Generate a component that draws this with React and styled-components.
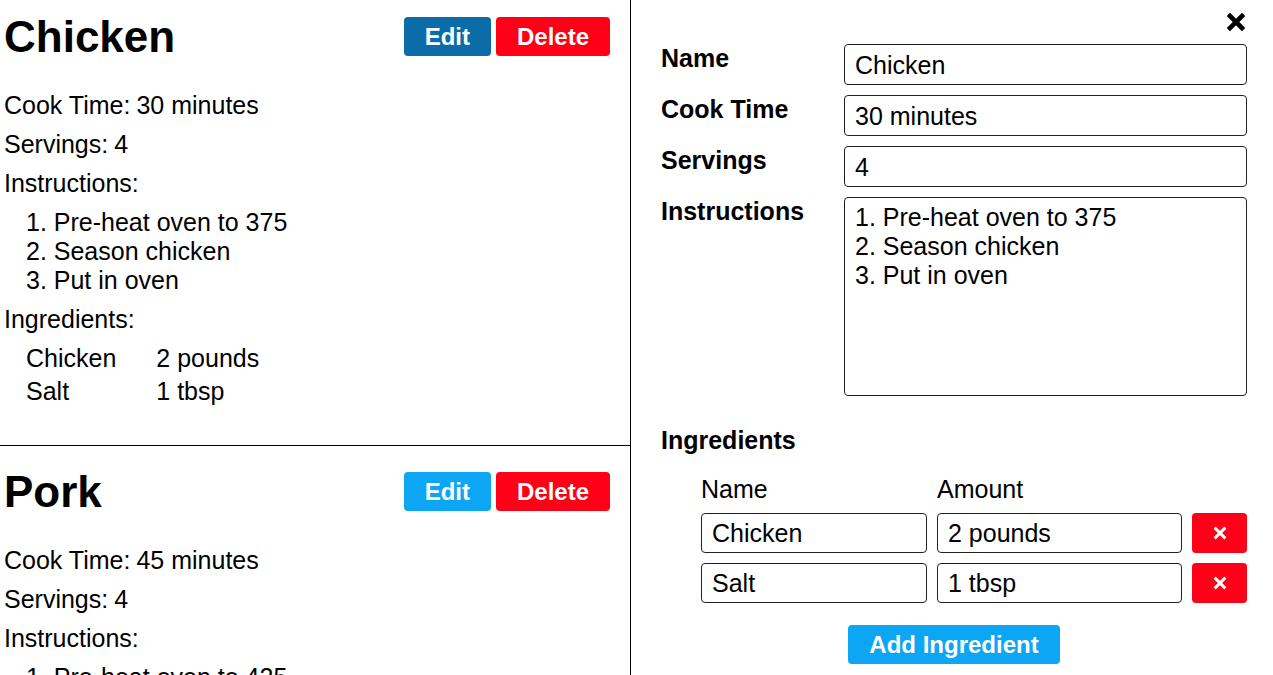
import React from "react";
import styled, { createGlobalStyle } from "styled-components";

const GlobalStyle = createGlobalStyle`
  * { box-sizing: border-box; }
  body {
    margin: 0;
    font-family: "Liberation Sans", Arial, sans-serif;
    color: #000;
    background: #fff;
  }
`;

const recipes = [
  {
    id: 1,
    name: "Chicken",
    cookTime: "30 minutes",
    servings: 4,
    instructions: "1. Pre-heat oven to 375\n2. Season chicken\n3. Put in oven",
    ingredients: [
      { id: 1, name: "Chicken", amount: "2 pounds" },
      { id: 2, name: "Salt", amount: "1 tbsp" },
    ],
  },
  {
    id: 2,
    name: "Pork",
    cookTime: "45 minutes",
    servings: 4,
    instructions: "1. Pre-heat oven to 425\n2. Season pork\n3. Put in oven",
    ingredients: [
      { id: 1, name: "Pork", amount: "3 pounds" },
      { id: 2, name: "Paprika", amount: "2 tbsp" },
    ],
  },
];

const Page = styled.div`
  display: grid;
  grid-template-columns: 631px 1fr;
  height: 100vh;
  overflow: hidden;
`;

const RecipeList = styled.div`
  border-right: 1px solid #000;
  overflow: hidden;
`;

const RecipeCard = styled.div`
  padding: 20px 20px 39px 4px;
  border-bottom: 1px solid #000;

  &:first-child {
    padding-top: 11px;
  }
`;

const Header = styled.div`
  display: flex;
  justify-content: space-between;
  align-items: center;
  margin-bottom: 29px;
`;

const Title = styled.h3`
  margin: 0;
  font-size: 44px;
  line-height: 51px;
  font-weight: bold;
`;

const Button = styled.button`
  border: none;
  border-radius: 4px;
  color: white;
  font-family: inherit;
  font-size: 24px;
  font-weight: bold;
  line-height: 27px;
  padding: 6px 21px;
  cursor: pointer;
  background-color: ${(props) =>
    props.variant === "danger"
      ? "#ff0018"
      : props.active
      ? "#0b6ca8"
      : "#0ca6f4"};

  & + & {
    margin-left: 5px;
  }
`;

const Row = styled.div`
  margin-top: 10px;
  font-size: 25px;
  line-height: 29px;

  &:first-of-type {
    margin-top: 0;
  }
`;

const Label = styled.span`
  margin-right: 6px;
`;

const Indented = styled.div`
  margin-top: 10px;
  margin-left: 22px;
  white-space: pre-wrap;
`;

const IngredientGrid = styled.div`
  display: grid;
  grid-template-columns: auto auto;
  justify-content: start;
  column-gap: 40px;
  row-gap: 4px;
`;

const EditPanel = styled.div`
  padding: 11px 26px 0 30px;
`;

const CloseRow = styled.div`
  display: flex;
  justify-content: flex-end;
  margin-bottom: 11px;
`;

const CloseButton = styled.button`
  background: none;
  border: none;
  padding: 0;
  width: 22px;
  height: 22px;
  cursor: pointer;
  display: flex;
  align-items: center;
  justify-content: center;
`;

const DetailsGrid = styled.div`
  display: grid;
  grid-template-columns: 173px 403px;
  column-gap: 10px;
  row-gap: 10px;
`;

const FieldLabel = styled.label`
  font-size: 25px;
  font-weight: bold;
  line-height: 29px;
`;

const TextInput = styled.input`
  height: ${(props) => props.h || 41}px;
  width: 100%;
  border: 1px solid #222;
  border-radius: 4px;
  padding: 1px 10px 0;
  font-family: inherit;
  font-size: 25px;
  color: #000;
  outline: none;
`;

const TextArea = styled.textarea`
  height: 199px;
  width: 100%;
  border: 1px solid #222;
  border-radius: 4px;
  padding: 5px 10px;
  font-family: inherit;
  font-size: 25px;
  line-height: 29px;
  resize: none;
  outline: none;
`;

const SectionTitle = styled.h3`
  margin: 30px 0 0;
  font-size: 25px;
  line-height: 29px;
  font-weight: bold;
`;

const IngredientEditGrid = styled.div`
  display: grid;
  grid-template-columns: 226px 245px 55px;
  column-gap: 10px;
  row-gap: 10px;
  margin: 20px 0 0 40px;
  font-size: 25px;
  line-height: 28px;
`;

const RemoveButton = styled.button`
  height: 40px;
  border: none;
  border-radius: 4px;
  background-color: #ff0018;
  display: flex;
  align-items: center;
  justify-content: center;
  cursor: pointer;
`;

const AddRow = styled.div`
  display: flex;
  justify-content: center;
  margin-top: 22px;
`;

function XIcon({ size, stroke, color }) {
  return (
    <svg width={size} height={size} viewBox="0 0 22 22">
      <path
        d="M5 5 L17 17 M17 5 L5 17"
        stroke={color}
        strokeWidth={stroke}
        strokeLinecap="square"
        fill="none"
      />
    </svg>
  );
}

function Recipe({ recipe, active }) {
  return (
    <RecipeCard>
      <Header>
        <Title>{recipe.name}</Title>
        <div>
          <Button active={active}>Edit</Button>
          <Button variant="danger">Delete</Button>
        </div>
      </Header>
      <Row>
        <Label>Cook Time:</Label>
        {recipe.cookTime}
      </Row>
      <Row>
        <Label>Servings:</Label>
        {recipe.servings}
      </Row>
      <Row>
        <Label>Instructions:</Label>
        <Indented>{recipe.instructions}</Indented>
      </Row>
      <Row>
        <Label>Ingredients:</Label>
        <Indented>
          <IngredientGrid>
            {recipe.ingredients.map((ing) => (
              <React.Fragment key={ing.id}>
                <span>{ing.name}</span>
                <span>{ing.amount}</span>
              </React.Fragment>
            ))}
          </IngredientGrid>
        </Indented>
      </Row>
    </RecipeCard>
  );
}

function RecipeEdit({ recipe }) {
  return (
    <EditPanel>
      <CloseRow>
        <CloseButton>
          <XIcon size={22} stroke={4.6} color="#000" />
        </CloseButton>
      </CloseRow>
      <DetailsGrid>
        <FieldLabel htmlFor="name">Name</FieldLabel>
        <TextInput id="name" defaultValue={recipe.name} />
        <FieldLabel htmlFor="cookTime">Cook Time</FieldLabel>
        <TextInput id="cookTime" defaultValue={recipe.cookTime} />
        <FieldLabel htmlFor="servings">Servings</FieldLabel>
        <TextInput id="servings" type="text" defaultValue={recipe.servings} />
        <FieldLabel htmlFor="instructions">Instructions</FieldLabel>
        <TextArea id="instructions" defaultValue={recipe.instructions} />
      </DetailsGrid>
      <SectionTitle>Ingredients</SectionTitle>
      <IngredientEditGrid>
        <div>Name</div>
        <div>Amount</div>
        <div />
        {recipe.ingredients.map((ing) => (
          <React.Fragment key={ing.id}>
            <TextInput h={40} defaultValue={ing.name} />
            <TextInput h={40} defaultValue={ing.amount} />
            <RemoveButton>
              <XIcon size={16} stroke={4} color="#fff" />
            </RemoveButton>
          </React.Fragment>
        ))}
      </IngredientEditGrid>
      <AddRow>
        <Button>Add Ingredient</Button>
      </AddRow>
    </EditPanel>
  );
}

export default function App() {
  return (
    <>
      <GlobalStyle />
      <Page>
        <RecipeList>
          {recipes.map((r, i) => (
            <Recipe key={r.id} recipe={r} active={i === 0} />
          ))}
        </RecipeList>
        <RecipeEdit recipe={recipes[0]} />
      </Page>
    </>
  );
}
